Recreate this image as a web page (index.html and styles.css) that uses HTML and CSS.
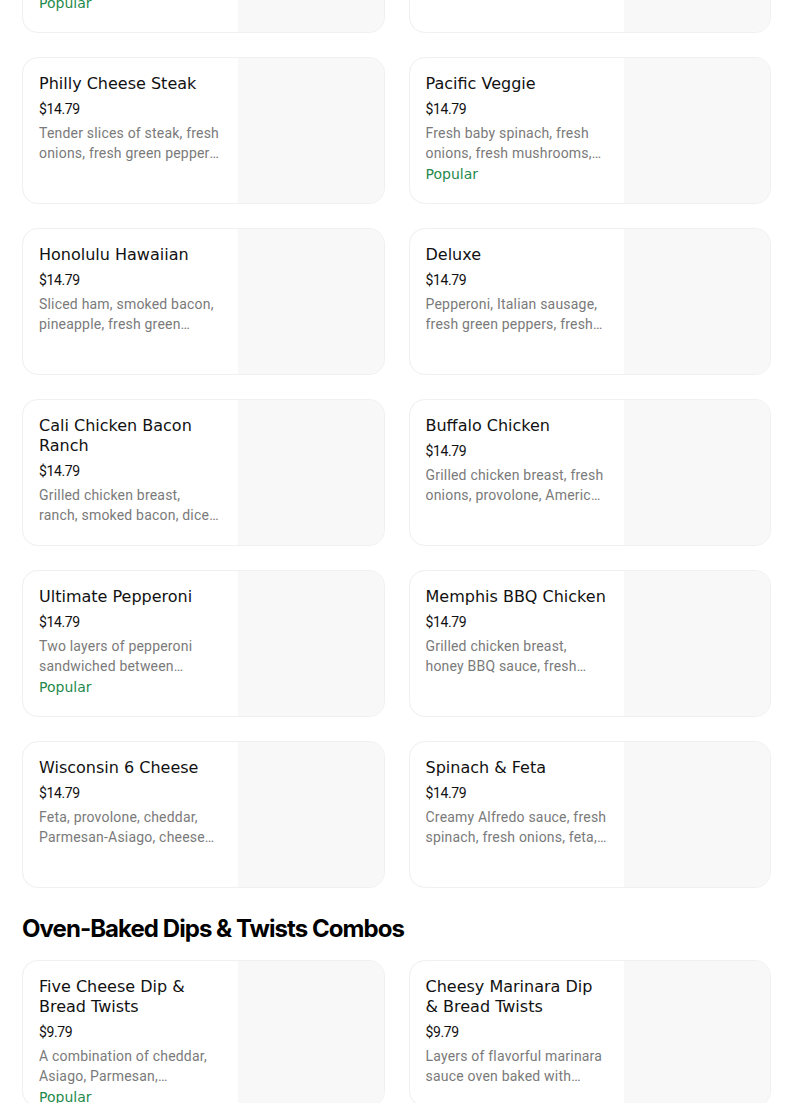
FILE: index.html
```html
<!DOCTYPE html>
<html lang="en">
<head>
<meta charset="utf-8">
<title>Menu</title>
<link rel="stylesheet" href="styles.css">
</head>
<body>
<main class="menu">
  <section class="section section-first">
    <div class="grid">
      <article class="card">
        <div class="info">
          <h3 class="name">ExtravaganZZa</h3>
          <div class="price">$14.79</div>
          <p class="desc">Pepperoni, ham, Italian sausage, beef, fresh onions, fresh green peppers</p>
          <div class="badge">Popular</div>
        </div>
        <div class="photo"></div>
      </article>
      <article class="card">
        <div class="info">
          <h3 class="name">MeatZZa</h3>
          <div class="price">$14.79</div>
          <p class="desc">Pepperoni, ham, Italian sausage and beef, all sandwiched between cheese</p>
        </div>
        <div class="photo"></div>
      </article>
      <article class="card">
        <div class="info">
          <h3 class="name">Philly Cheese Steak</h3>
          <div class="price">$14.79</div>
          <p class="desc">Tender slices of steak, fresh onions, fresh green peppers, fresh mushrooms</p>
        </div>
        <div class="photo"></div>
      </article>
      <article class="card">
        <div class="info">
          <h3 class="name">Pacific Veggie</h3>
          <div class="price">$14.79</div>
          <p class="desc">Fresh baby spinach, fresh onions, fresh mushrooms, tomatoes, black olives</p>
          <div class="badge">Popular</div>
        </div>
        <div class="photo"></div>
      </article>
      <article class="card">
        <div class="info">
          <h3 class="name">Honolulu Hawaiian</h3>
          <div class="price">$14.79</div>
          <p class="desc">Sliced ham, smoked bacon, pineapple, fresh green peppers, roasted red peppers</p>
        </div>
        <div class="photo"></div>
      </article>
      <article class="card">
        <div class="info">
          <h3 class="name">Deluxe</h3>
          <div class="price">$14.79</div>
          <p class="desc">Pepperoni, Italian sausage, fresh green peppers, fresh mushrooms, fresh onions</p>
        </div>
        <div class="photo"></div>
      </article>
      <article class="card">
        <div class="info">
          <h3 class="name">Cali Chicken Bacon Ranch</h3>
          <div class="price">$14.79</div>
          <p class="desc">Grilled chicken breast, ranch, smoked bacon, diced tomatoes, provolone</p>
        </div>
        <div class="photo"></div>
      </article>
      <article class="card">
        <div class="info">
          <h3 class="name">Buffalo Chicken</h3>
          <div class="price">$14.79</div>
          <p class="desc">Grilled chicken breast, fresh onions, provolone, American cheese, cheddar</p>
        </div>
        <div class="photo"></div>
      </article>
      <article class="card">
        <div class="info">
          <h3 class="name">Ultimate Pepperoni</h3>
          <div class="price">$14.79</div>
          <p class="desc">Two layers of pepperoni sandwiched between provolone and mozzarella</p>
          <div class="badge">Popular</div>
        </div>
        <div class="photo"></div>
      </article>
      <article class="card">
        <div class="info">
          <h3 class="name">Memphis BBQ Chicken</h3>
          <div class="price">$14.79</div>
          <p class="desc">Grilled chicken breast, honey BBQ sauce, fresh onions, provolone, cheddar</p>
        </div>
        <div class="photo"></div>
      </article>
      <article class="card">
        <div class="info">
          <h3 class="name">Wisconsin 6 Cheese</h3>
          <div class="price">$14.79</div>
          <p class="desc">Feta, provolone, cheddar, Parmesan-Asiago, cheese made with 100% real mozzarella</p>
        </div>
        <div class="photo"></div>
      </article>
      <article class="card">
        <div class="info">
          <h3 class="name">Spinach &amp; Feta</h3>
          <div class="price">$14.79</div>
          <p class="desc">Creamy Alfredo sauce, fresh spinach, fresh onions, feta, Parmesan-Asiago</p>
        </div>
        <div class="photo"></div>
      </article>
    </div>
  </section>

  <section class="section">
    <h2 class="section-title">Oven-Baked Dips &amp; Twists Combos</h2>
    <div class="grid">
      <article class="card">
        <div class="info">
          <h3 class="name">Five Cheese Dip &amp; Bread Twists</h3>
          <div class="price">$9.79</div>
          <p class="desc">A combination of cheddar, Asiago, Parmesan, provolone and mozzarella</p>
          <div class="badge">Popular</div>
        </div>
        <div class="photo"></div>
      </article>
      <article class="card">
        <div class="info">
          <h3 class="name">Cheesy Marinara Dip &amp; Bread Twists</h3>
          <div class="price">$9.79</div>
          <p class="desc">Layers of flavorful marinara sauce oven baked with cheese</p>
        </div>
        <div class="photo"></div>
      </article>
    </div>
  </section>
</main>
</body>
</html>
```

FILE: styles.css
```css
* { box-sizing: border-box; }

html, body {
  margin: 0;
  padding: 0;
  background: #ffffff;
}

body {
  font-family: "DejaVu Sans", sans-serif;
  color: #000;
  overflow: hidden;
}

.menu {
  padding: 0 33px 0 22px;
}

.section-first {
  margin-top: -114px;
}

.grid {
  display: grid;
  grid-template-columns: 1fr 1fr;
  column-gap: 24px;
  row-gap: 24px;
}

.card {
  display: flex;
  height: 147px;
  border: 1px solid #f0f0f0;
  border-radius: 16px;
  overflow: hidden;
  background: #fff;
  box-shadow: 0 0 1px rgba(0,0,0,0.03);
}

.info {
  flex: 1 1 auto;
  min-width: 0;
  padding: 16px 16px 0 16px;
}

.photo {
  flex: 0 0 146px;
  background: #f8f8f8;
}

.name {
  margin: 0;
  font-family: "DejaVu Sans", sans-serif;
  font-weight: normal;
  font-size: 16px;
  line-height: 20px;
  color: #111;
}

.price {
  margin-top: 4px;
  font-family: Roboto, "Liberation Sans", sans-serif;
  font-size: 14px;
  line-height: 22px;
  letter-spacing: -0.4px;
  color: #111;
}

.desc {
  margin: 3px 0 0;
  font-family: Roboto, "Liberation Sans", sans-serif;
  font-size: 14px;
  line-height: 20px;
  letter-spacing: 0.2px;
  color: #7a7a7a;
  display: -webkit-box;
  -webkit-box-orient: vertical;
  -webkit-line-clamp: 2;
  overflow: hidden;
}

.badge {
  margin-top: 1px;
  font-family: "DejaVu Sans", sans-serif;
  font-size: 14px;
  line-height: 20px;
  color: #1f8a4c;
}

.section-title {
  margin: 25px 0 15px;
  font-family: Inter, "Liberation Sans", sans-serif;
  font-weight: 700;
  font-size: 24px;
  line-height: 32px;
  letter-spacing: -0.95px;
  color: #000;
}
```
